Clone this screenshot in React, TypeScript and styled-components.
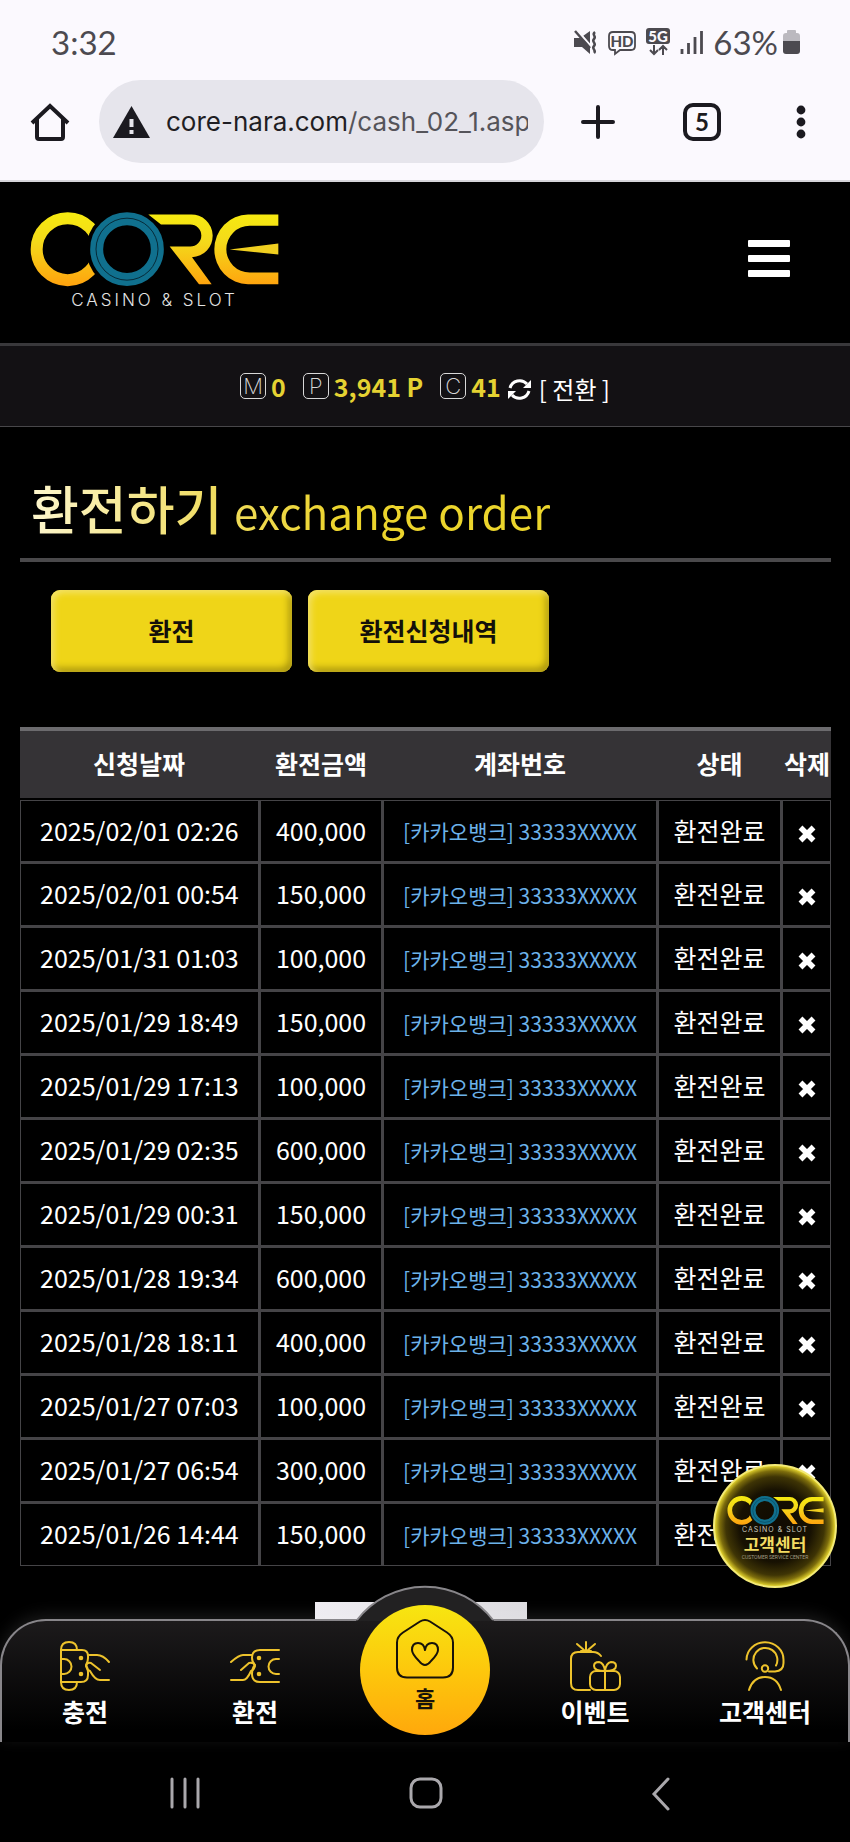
import React from "react";
import styled, { createGlobalStyle } from "styled-components";

const GlobalStyle = createGlobalStyle`
  *, *::before, *::after { box-sizing: border-box; }
  body { margin: 0; background: #000; }
  button { font: inherit; color: inherit; background: none; border: 0; padding: 0; cursor: pointer; }
  a { color: inherit; text-decoration: none; }
  svg { display: block; flex: none; overflow: visible; }
`;

const korean = `"Noto Sans CJK KR", "Noto Sans", sans-serif`;

const Screen = styled.div`
  position: relative;
  display: flex;
  flex-direction: column;
  min-height: 100vh;
  background: #000;
  color: #fff;
  font-family: ${korean};
`;

/* ---------- phone status bar and browser toolbar ---------- */

const BrowserChrome = styled.div`
  background: #fbf9fe;
  color: #1b1a20;
  border-bottom: 2px solid #d6d5da;
  font-family: Lato, sans-serif;
`;

const StatusBar = styled.div`
  display: flex;
  align-items: center;
  justify-content: space-between;
  height: 80px;
  padding: 4px 50px 0 51px;
  color: #4c4a50;
  font-size: 33px;
  line-height: 40px;
`;

const StatusIcons = styled.div`
  display: flex;
  align-items: center;
  gap: 10px;
`;

const Battery = styled.span`
  display: flex;
  align-items: center;
  gap: 5px;
`;

const Toolbar = styled.div`
  display: flex;
  align-items: center;
  height: 100px;
  padding: 0 44px 17px 31px;
`;

const AddressBar = styled.button`
  display: flex;
  align-items: center;
  flex: 1;
  min-width: 0;
  height: 83px;
  margin: 0 37px 0 30px;
  padding: 0 16px 0 14px;
  gap: 16px;
  border-radius: 42px;
  background: #e6e5ec;
`;

const Url = styled.span`
  flex: 1;
  min-width: 0;
  overflow: hidden;
  white-space: nowrap;
  text-align: left;
  font-family: Inter, sans-serif;
  font-size: 26px;
  line-height: 36px;
  color: #55545a;
`;

const Domain = styled.span`
  color: #1f1e24;
`;

const ToolActions = styled.div`
  display: flex;
  align-items: center;
`;

const TabCount = styled.button`
  width: 38px;
  height: 38px;
  margin: 0 75px 0 68px;
  border: 4px solid #1b1a20;
  border-radius: 10px;
  font-size: 24px;
  font-weight: 700;
  line-height: 28px;
`;

/* ---------- site header ---------- */

const SiteHeader = styled.header`
  display: flex;
  justify-content: space-between;
  align-items: flex-start;
  height: 161px;
  padding: 30px 60px 0 30px;
`;

const LogoLink = styled.a`
  display: flex;
  flex-direction: column;
  align-items: center;
  gap: 3px;
`;

const Tagline = styled.span`
  font-family: Inter, sans-serif;
  font-weight: 300;
  font-size: 17px;
  line-height: 20px;
  letter-spacing: 3px;
  color: #e4e4e4;
`;

const MenuButton = styled.button`
  display: flex;
  flex-direction: column;
  gap: 8px;
  margin-top: 28px;
`;

const MenuBar = styled.span`
  width: 42px;
  height: 7px;
  border-radius: 1px;
  background: #fff;
`;

const BalanceBar = styled.section`
  display: flex;
  justify-content: center;
  align-items: center;
  height: 84px;
  gap: 17px;
  border-top: 3px solid #39383b;
  border-bottom: 1px solid #48474a;
  background: #131114;
`;

const Balance = styled.span`
  display: flex;
  align-items: center;
  gap: 5px;
`;

const BalanceMark = styled.span`
  width: 26px;
  height: 26px;
  border: 1px solid #d8d8d8;
  border-radius: 5px;
  font-family: Inter, sans-serif;
  font-weight: 200;
  font-size: 22px;
  line-height: 24px;
  text-align: center;
  color: #d8d8d8;
`;

const BalanceValue = styled.strong`
  font-size: 25px;
  line-height: 36px;
  font-weight: 700;
  color: #e5d232;
`;

const ConvertButton = styled.button`
  display: flex;
  align-items: center;
  gap: 8px;
  margin: 6px 0 0 -10px;
  font-size: 24px;
  line-height: 32px;
`;

/* ---------- page content ---------- */

const Main = styled.main`
  padding: 0 19px 36px 20px;
`;

const PageTitle = styled.h1`
  margin: 0;
  padding: 51px 0 20px 11px;
  border-bottom: 4px solid #4a494b;
  font-size: 52px;
  font-weight: 500;
  line-height: 60px;
`;

const TitleText = styled.span`
  background: linear-gradient(90deg, #fdf6cd 0%, #f0dc5e 36%, #ecd42c 60%, #ecd62c 100%);
  background-clip: text;
  -webkit-background-clip: text;
  color: transparent;
`;

const TitleEnglish = styled.span`
  font-size: 44px;
  font-weight: 400;
  line-height: 44px;
`;

const Tabs = styled.div`
  display: flex;
  gap: 16px;
  padding: 28px 0 55px 31px;
`;

const TabButton = styled.button`
  width: 241px;
  height: 82px;
  padding-bottom: 2px;
  border-radius: 9px;
  background: #efd518;
  box-shadow: inset 3px 3px 6px #f5e368, inset -3px -4px 7px #a8940c;
  color: #14100a;
  font-size: 25px;
  font-weight: 700;
  line-height: 36px;
`;

const History = styled.table`
  width: 100%;
  table-layout: fixed;
  border-collapse: separate;
  border-spacing: 0;
  font-size: 25px;
  line-height: 36px;
  text-align: center;
  white-space: nowrap;
`;

const Col = styled.col<{ $share: number }>`
  width: ${(p) => p.$share}%;
`;

const HeadCell = styled.th`
  height: 73px;
  padding: 0 3px 3px 0;
  border-top: 4px solid #6c6b6e;
  border-bottom: 2px solid #000;
  background: #353336;
  font-weight: 700;

  &:last-child { padding-right: 0; }
`;

const Row = styled.tr``;

const Cell = styled.td`
  height: 64px;
  padding: 0 0 3px;
  border: solid #454447;
  border-width: 0 3px 3px 0;

  &:first-child { border-left-width: 1px; }
  &:last-child { border-right-width: 1px; }
  ${Row}:first-child & { border-top-width: 1px; }
  ${Row}:last-child & { height: 62px; border-bottom-width: 1px; }
`;

const AccountCell = styled(Cell)`
  padding: 0;
  font-size: 21px;
  color: #6cb2ea;
`;

const DeleteButton = styled.button`
  display: flex;
  width: 100%;
  justify-content: center;
  padding-top: 8px;
`;

const Banner = styled.div`
  align-self: center;
  width: 212px;
  height: 17px;
  margin-right: 8px;
  background: linear-gradient(90deg, #efedf2, #dddce0);
`;

/* ---------- bottom navigation ---------- */

const BottomNav = styled.nav`
  position: relative;
  display: grid;
  grid-template-columns: repeat(5, 1fr);
  height: 123px;
  border-radius: 46px 46px 0 0;
  background: linear-gradient(#1d1b1c, #000 90%);
  box-shadow: 0 -4px 16px rgba(255, 255, 255, 0.1);
  font-size: 25px;
  font-weight: 700;
  line-height: 32px;

  &::before {
    content: "";
    position: absolute;
    inset: 0;
    border: 2px solid #88868a;
    border-bottom: 0;
    border-radius: inherit;
  }
`;

const NavLink = styled.a`
  position: relative;
  display: flex;
  flex-direction: column;
  align-items: center;
  gap: 4px;
  padding-top: 22px;
`;

const HomeBump = styled.svg`
  position: absolute;
  left: 50%;
  top: -34px;
  transform: translateX(-50%);
`;

const HomeLink = styled.a`
  position: absolute;
  left: 50%;
  top: -14px;
  transform: translateX(-50%);
  display: flex;
  flex-direction: column;
  align-items: center;
  gap: 2px;
  width: 130px;
  height: 130px;
  padding-top: 14px;
  border-radius: 50%;
  background: linear-gradient(#f7e611, #fdc80c 50%, #ffa80c);
  color: #17120a;
  font-size: 22px;
`;

const SupportBadge = styled.a`
  position: absolute;
  right: 13px;
  bottom: 254px;
  display: flex;
  flex-direction: column;
  align-items: center;
  width: 124px;
  height: 124px;
  padding-top: 30px;
  border: 2px solid #f3ea78;
  border-radius: 50%;
  background: radial-gradient(circle closest-side, #0f0a02 0%, #171102 60%, #3e3405 82%, #7d6d0c 92%, #e0d02c 100%);
`;

const BadgeTagline = styled.span`
  font-family: Inter, sans-serif;
  font-size: 7px;
  line-height: 9px;
  letter-spacing: 1px;
  color: #c9c7bd;
`;

const BadgeTitle = styled.span`
  font-size: 17px;
  font-weight: 700;
  line-height: 20px;
  color: #f3dc62;
`;

const BadgeCaption = styled.span`
  font-family: Roboto, sans-serif;
  font-size: 5px;
  line-height: 7px;
  color: #a39d84;
`;

const SystemBar = styled.div`
  display: flex;
  flex: 1;
  align-items: flex-start;
  justify-content: space-between;
  min-height: 100px;
  padding: 35px 180px 0 170px;
`;

/* ---------- drawings ---------- */

function Logo({ width, id }: { width: number; id: string }) {
  return (
    <svg width={width} height={Math.round(width * 0.3)} viewBox="91 96 747 224" aria-label="CORE">
      <defs>
        <linearGradient id={id} gradientUnits="userSpaceOnUse" x1="0" y1="100" x2="0" y2="316">
          <stop offset="0" stopColor="#f6ea10" />
          <stop offset="0.4" stopColor="#f4d91a" />
          <stop offset="1" stopColor="#ffa30e" />
        </linearGradient>
        <mask id={id + "cut"} maskUnits="userSpaceOnUse" x="90" y="90" width="760" height="240">
          <rect x="90" y="90" width="760" height="240" fill="#fff" />
          <circle cx="382" cy="207" r="122" fill="#000" />
        </mask>
      </defs>
      <circle cx="204" cy="207" r="93" fill="none" stroke={`url(#${id})`} strokeWidth="36" mask={`url(#${id}cut)`} />
      <circle cx="382" cy="207" r="91" fill="none" stroke="#10708e" strokeWidth="39" />
      <circle cx="382" cy="207" r="93" fill="none" stroke="#062a38" strokeWidth="3" />
      <path
        fill={`url(#${id})`}
        d="M446 103H573A64 64 0 0 1 577 231L636 312H598L510 199H572A33 33 0 0 0 572 133H484Z"
      />
      <path fill={`url(#${id})`} d="M836 103H745A101 104.500 0 0 0 745 312H836V277H750A70 70 0 0 1 750 137H836Z" />
      <path fill="#f0cf20" d="M690 208L836 190V223Z" />
    </svg>
  );
}

const MuteIcon = () => (
  <svg width="25" height="25" viewBox="0 0 25 25" fill="#4c4a50">
    <path d="M1 8h6l10 6v10l-8-7H1z" />
    <path d="M10 6l7-5v13z" />
    <path d="M4 0l18 21" stroke="#fbf9fe" strokeWidth="2" />
    <path d="M2 1l15 17" stroke="#4c4a50" strokeWidth="2.500" />
    <path d="M22 2c-4 3 2 4-1 7s3 4 0 7 3 4 0 7" fill="none" stroke="#4c4a50" strokeWidth="2.500" />
  </svg>
);

const HdIcon = () => (
  <svg width="28" height="25" viewBox="0 0 28 25">
    <path
      d="M5 2h18q4 0 4 4v10q0 4-4 4H12l-5 4v-4H5q-4 0-4-4V6q0-4 4-4z"
      fill="none"
      stroke="#4c4a50"
      strokeWidth="1.800"
    />
    <text x="14" y="16.500" textAnchor="middle" fontFamily="Lato" fontWeight="900" fontSize="15" fill="#4c4a50">HD</text>
  </svg>
);

const FiveGIcon = () => (
  <svg width="24" height="28" viewBox="0 0 24 28">
    <rect x="0" y="0" width="24" height="16" rx="3" fill="#4c4a50" />
    <text x="12" y="13.500" textAnchor="middle" fontFamily="Lato" fontWeight="900" fontSize="15" fill="#fbf9fe">5G</text>
    <path d="M8 17v9M4 22l4 4 4-4M17 27v-9M13 22l4-4 4 4" fill="none" stroke="#4c4a50" strokeWidth="2" />
  </svg>
);

const SignalIcon = () => (
  <svg width="23" height="24" viewBox="0 0 23 24" stroke="#4c4a50" strokeWidth="2.800">
    <path d="M2 24v-5M8.500 24v-11M15 24V7M21.500 24V1" />
  </svg>
);

const BatteryIcon = () => (
  <svg width="17" height="24" viewBox="0 0 17 24">
    <path d="M0 11V6q0-3 3-3h1V1q0-1 1-1h7q1 0 1 1v2h1q3 0 3 3v5z" fill="#bbb9bf" />
    <path d="M0 11h17v10q0 3-3 3H3q-3 0-3-3z" fill="#4c4a50" />
  </svg>
);

const BrowserHomeIcon = () => (
  <svg width="38" height="38" viewBox="0 0 38 38" fill="none" stroke="#1b1a20" strokeWidth="4">
    <path d="M1 20L19 3l18 17" />
    <path d="M6 16v18q0 2 2 2h22q2 0 2-2V16" />
  </svg>
);

const WarningIcon = () => (
  <svg width="37" height="32" viewBox="0 0 37 32">
    <path d="M18.500 0L37 32H0z" fill="#1b1a20" />
    <path d="M18.500 13v8M18.500 24v4" stroke="#e6e5ec" strokeWidth="4" />
  </svg>
);

const PlusIcon = () => (
  <svg width="34" height="34" viewBox="0 0 34 34" stroke="#1b1a20" strokeWidth="4" strokeLinecap="round">
    <path d="M17 2v30M2 17h30" />
  </svg>
);

const MoreIcon = () => (
  <svg width="10" height="34" viewBox="0 0 10 34" fill="#1b1a20">
    <circle cx="5" cy="5" r="4.400" />
    <circle cx="5" cy="17" r="4.400" />
    <circle cx="5" cy="29" r="4.400" />
  </svg>
);

const RefreshIcon = () => (
  <svg width="23" height="23" viewBox="0 0 23 23" fill="none" stroke="#fff" strokeWidth="3">
    <path d="M2 10A10 10 0 0 1 19 6" />
    <path d="M21 13A10 10 0 0 1 4 17" />
    <path d="M23 2v8h-8zM0 21v-8h8z" fill="#fff" stroke="none" />
  </svg>
);

const CrossIcon = () => (
  <svg width="18" height="18" viewBox="0 0 18 18" stroke="#fff" strokeWidth="5.500">
    <path d="M2.500 2.500l13 13M15.500 2.500l-13 13" />
  </svg>
);

const NavSvg = styled.svg.attrs({ width: 50, height: 50, viewBox: "0 0 50 50" })`
  fill: none;
  stroke: #eec32c;
  stroke-width: 2;
  stroke-linecap: round;
  stroke-linejoin: round;
`;

const DepositIcon = () => (
  <NavSvg>
    <path d="M1 9v32M1 9q0-8 8-8t8 8M1 41q0 8 8 8t8-8" />
    <path d="M1 9h21q6 0 6 6v2q0 4-2 7 2 3 2 7v3q0 7-7 7H1" />
    <path d="M1 18h3a7 7 0 0 1 0 15H1" />
    <circle cx="21" cy="17" r="1.300" fill="#eec32c" />
    <circle cx="21" cy="33" r="1.300" fill="#eec32c" />
    <path d="M28 14h9q6 0 12 7M40 29L31 22q-4-1-5 3 1 4 4 5 5 9 10 9h9" />
  </NavSvg>
);

const WithdrawIcon = () => (
  <NavSvg>
    <path d="M49 9H30q-8 0-8 8 0 4 3 7-3 3-3 9 0 8 8 8h19M49 18h-3a7 7 0 0 0 0 15h3" />
    <circle cx="29" cy="17" r="1.300" fill="#eec32c" />
    <circle cx="29" cy="33" r="1.300" fill="#eec32c" />
    <path d="M22 14h-9q-4 0-12 7M11 29l8-7q5-1 6 3-1 4-4 5-4 9-8 9H1" />
  </NavSvg>
);

const EventIcon = () => (
  <NavSvg>
    <path d="M20 49H8q-7 0-7-7V18q0-7 7-7h15q5 0 8 4M16 10V1M14 9L7 3M18 9l7-6M11 10h10" />
    <rect x="20" y="30" width="30" height="19" rx="6" />
    <path d="M35 30v19M35 30q-11 0-11-5 0-4 5-4 5 1 6 9M35 30q11 0 11-5 0-4-5-4-5 1-6 9" />
  </NavSvg>
);

const SupportIcon = () => (
  <NavSvg>
    <path d="M6.500 18.500A18.500 17.500 0 0 1 43.500 19V22Q43.500 30 35 30.500H29" />
    <path d="M17 27.500A12 12 0 1 1 36 24.500" />
    <circle cx="25" cy="27.500" r="3.200" />
    <path d="M9 49q4-13 16-13t16 13" />
  </NavSvg>
);

const HomeHeartIcon = () => (
  <svg width="60" height="60" viewBox="0 0 60 60" fill="none" stroke="#17120a" strokeWidth="2" strokeLinejoin="round">
    <path d="M25 2.500q5-3 10 0l17 11q6 4 6 10v25q0 10-10 10H12Q2 58.500 2 48.500v-25q0-6 6-10z" />
    <path d="M30 46q-3 0-6-4-7-7-7-11 0-7 6-7 6 0 7 7 1-7 7-7 6 0 6 7 0 4-7 11-3 4-6 4z" />
  </svg>
);

/* ---------- data ---------- */

const ACCOUNT = "[카카오뱅크] 33333XXXXX";

const rows: [string, string][] = [
  ["2025/02/01 02:26", "400,000"],
  ["2025/02/01 00:54", "150,000"],
  ["2025/01/31 01:03", "100,000"],
  ["2025/01/29 18:49", "150,000"],
  ["2025/01/29 17:13", "100,000"],
  ["2025/01/29 02:35", "600,000"],
  ["2025/01/29 00:31", "150,000"],
  ["2025/01/28 19:34", "600,000"],
  ["2025/01/28 18:11", "400,000"],
  ["2025/01/27 07:03", "100,000"],
  ["2025/01/27 06:54", "300,000"],
  ["2025/01/26 14:44", "150,000"],
];

const balances = [
  ["M", "0"],
  ["P", "3,941 P"],
  ["C", "41"],
];

export default function App() {
  return (
    <Screen>
      <GlobalStyle />
      <BrowserChrome>
        <StatusBar>
          <span>3:32</span>
          <StatusIcons>
            <MuteIcon />
            <HdIcon />
            <FiveGIcon />
            <SignalIcon />
            <Battery>
              63%
              <BatteryIcon />
            </Battery>
          </StatusIcons>
        </StatusBar>
        <Toolbar>
          <button aria-label="Home"><BrowserHomeIcon /></button>
          <AddressBar>
            <WarningIcon />
            <Url><Domain>core-nara.com</Domain>/cash_02_1.asp</Url>
          </AddressBar>
          <ToolActions>
            <button aria-label="New tab"><PlusIcon /></button>
            <TabCount>5</TabCount>
            <button aria-label="More"><MoreIcon /></button>
          </ToolActions>
        </Toolbar>
      </BrowserChrome>

      <SiteHeader>
        <LogoLink href="#">
          <Logo width={249} id="logo" />
          <Tagline>CASINO &amp; SLOT</Tagline>
        </LogoLink>
        <MenuButton aria-label="Menu">
          <MenuBar /><MenuBar /><MenuBar />
        </MenuButton>
      </SiteHeader>

      <BalanceBar>
        {balances.map(([mark, value]) => (
          <Balance key={mark}>
            <BalanceMark>{mark}</BalanceMark>
            <BalanceValue>{value}</BalanceValue>
          </Balance>
        ))}
        <ConvertButton><RefreshIcon />[ 전환 ]</ConvertButton>
      </BalanceBar>

      <Main>
        <PageTitle>
          <TitleText>환전하기 <TitleEnglish>exchange order</TitleEnglish></TitleText>
        </PageTitle>
        <Tabs>
          <TabButton>환전</TabButton>
          <TabButton>환전신청내역</TabButton>
        </Tabs>
        <History>
          <colgroup>
            <Col $share={29.7} />
            <Col $share={15.2} />
            <Col $share={33.9} />
            <Col $share={15.3} />
            <Col $share={5.9} />
          </colgroup>
          <thead>
            <tr>
              <HeadCell>신청날짜</HeadCell>
              <HeadCell>환전금액</HeadCell>
              <HeadCell>계좌번호</HeadCell>
              <HeadCell>상태</HeadCell>
              <HeadCell>삭제</HeadCell>
            </tr>
          </thead>
          <tbody>
            {rows.map(([date, amount]) => (
              <Row key={date}>
                <Cell>{date}</Cell>
                <Cell>{amount}</Cell>
                <AccountCell>{ACCOUNT}</AccountCell>
                <Cell>환전완료</Cell>
                <Cell><DeleteButton aria-label="삭제"><CrossIcon /></DeleteButton></Cell>
              </Row>
            ))}
          </tbody>
        </History>
      </Main>

      <Banner />

      <BottomNav>
        <NavLink href="#"><DepositIcon />충전</NavLink>
        <NavLink href="#"><WithdrawIcon />환전</NavLink>
        <span />
        <NavLink href="#"><EventIcon />이벤트</NavLink>
        <NavLink href="#"><SupportIcon />고객센터</NavLink>
        <HomeBump width="138" height="36" viewBox="0 0 138 36">
          <path d="M0 36A86 86 0 0 1 138 36z" fill="#222122" />
          <path d="M1 35A86 86 0 0 1 137 35" fill="none" stroke="#88868a" strokeWidth="2" />
        </HomeBump>
        <HomeLink href="#"><HomeHeartIcon />홈</HomeLink>
      </BottomNav>

      <SystemBar>
        <button aria-label="Recent apps">
          <svg width="30" height="32" viewBox="0 0 30 32" stroke="#aaa8ac" strokeWidth="3" strokeLinecap="round">
            <path d="M2 2v28M15 2v28M28 2v28" />
          </svg>
        </button>
        <button aria-label="Home screen">
          <svg width="34" height="32" viewBox="0 0 34 32" fill="none" stroke="#aaa8ac" strokeWidth="3">
            <rect x="2" y="2" width="30" height="28" rx="9" />
          </svg>
        </button>
        <button aria-label="Back">
          <svg width="18" height="34" viewBox="0 0 18 34" fill="none" stroke="#aaa8ac" strokeWidth="3" strokeLinecap="round">
            <path d="M16 2L2 17l14 15" />
          </svg>
        </button>
      </SystemBar>

      <SupportBadge href="#">
        <Logo width={97} id="badge" />
        <BadgeTagline>CASINO &amp; SLOT</BadgeTagline>
        <BadgeTitle>고객센터</BadgeTitle>
        <BadgeCaption>CUSTOMER SERVICE CENTER</BadgeCaption>
      </SupportBadge>
    </Screen>
  );
}
